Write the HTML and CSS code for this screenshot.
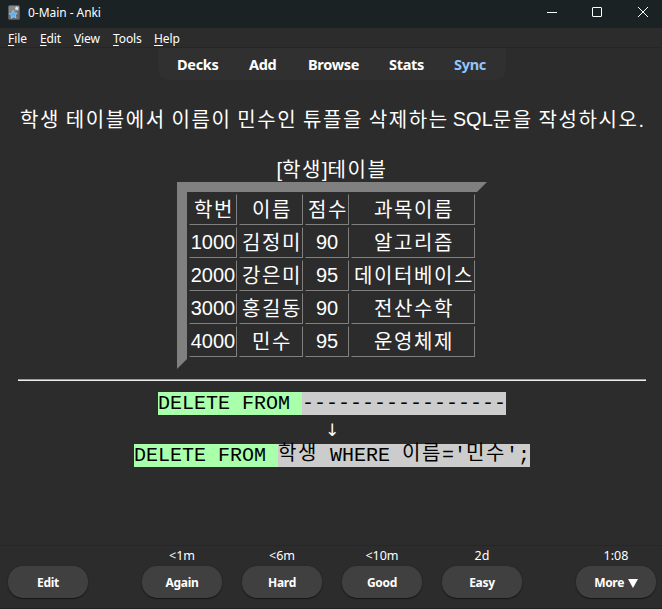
FILE: index.html
```html
<!DOCTYPE html>
<html lang="ko">
<head>
<meta charset="utf-8">
<title>0-Main - Anki</title>
<link rel="stylesheet" href="styles.css">
</head>
<body>
<header class="titlebar">
  <svg class="logo" width="12" height="15" viewBox="0 0 12 15">
    <rect x="0.2" y="0.2" width="11.6" height="14.6" rx="1.6" fill="#686a6b"/>
    <path d="M1 1h10v5L1 8z" fill="#858788"/>
    <path d="M5 5.3l1.4 2.5 2.8.2-1.8 2.1.7 2.8-2.7-1-2.4 1.5.2-2.8L1 8.7l2.9-.7z" fill="#5fb0f0" stroke="#c5e3fa" stroke-width=".5"/>
    <path d="M8.8 1l.7 1.4 1.5.1-1 1.2.3 1.5-1.5-.6-1.3.8.1-1.6L6.500 2.700l1.500-.3z" fill="#d8edfc"/>
  </svg>
  <span class="window-title">0-Main - Anki</span>
  <svg class="controls" width="104" height="12" viewBox="0 0 104 12" fill="none" stroke="#fff">
    <path d="M1 6.500h10"/>
    <rect x="46.500" y="1.500" width="9" height="9" rx=".5"/>
    <path d="M92 1l10 10M102 1L92 11"/>
  </svg>
</header>
<nav class="menubar">
  <span class="m-file"><u>F</u>ile</span><span class="m-edit"><u>E</u>dit</span><span class="m-view"><u>V</u>iew</span><span class="m-tools"><u>T</u>ools</span><span class="m-help"><u>H</u>elp</span>
</nav>
<nav class="toolbar">
  <span class="t-decks">Decks</span><span class="t-add">Add</span><span class="t-browse">Browse</span><span class="t-stats">Stats</span><span class="t-sync">Sync</span>
</nav>
<main class="card">
  <p class="question"><span class="ko">학생 테이블에서 이름이 민수인 튜플을 삭제하는</span> <span class="latin">SQL</span><span class="ko">문을 작성하시오</span>.</p>
  <p class="caption">[<span class="ko">학생</span>]<span class="ko">테이블</span></p>
  <table class="students">
    <colgroup><col class="c-id"><col class="c-name"><col class="c-score"><col class="c-subject"></colgroup>
    <tr><td class="ko">학번</td><td class="ko">이름</td><td class="ko">점수</td><td class="ko">과목이름</td></tr>
    <tr><td>1000</td><td class="ko">김정미</td><td>90</td><td class="ko">알고리즘</td></tr>
    <tr><td>2000</td><td class="ko">강은미</td><td>95</td><td class="ko">데이터베이스</td></tr>
    <tr><td>3000</td><td class="ko">홍길동</td><td>90</td><td class="ko">전산수학</td></tr>
    <tr><td>4000</td><td class="ko">민수</td><td>95</td><td class="ko">운영체제</td></tr>
  </table>
  <div class="divider"></div>
  <div class="answer">
    <div class="code"><span class="good">DELETE FROM </span><span class="missed">-----------------</span></div>
    <div class="arrow">↓</div>
    <div class="code"><span class="good">DELETE FROM </span><span class="missed"><span class="ko">학생</span> WHERE <span class="ko">이름</span>='<span class="ko">민수</span>';</span></div>
  </div>
</main>
<footer class="bottom">
  <div class="action"><span class="due"></span><button>Edit</button></div>
  <div class="grades">
    <div class="action"><span class="due">&lt;1m</span><button>Again</button></div>
    <div class="action"><span class="due">&lt;6m</span><button>Hard</button></div>
    <div class="action"><span class="due">&lt;10m</span><button>Good</button></div>
    <div class="action"><span class="due">2d</span><button>Easy</button></div>
  </div>
  <div class="action"><span class="due">1:08</span><button>More <svg width="10" height="9" viewBox="0 0 10 9"><path d="M0 0h10L5 9z" fill="#fff"/></svg></button></div>
</footer>
</body>
</html>
```
FILE: styles.css
```css
* { box-sizing: border-box; }
body {
  margin: 0;
  width: 662px;
  height: 609px;
  overflow: hidden;
  display: flex;
  flex-direction: column;
  background: #2c2c2c;
  color: #fff;
  font-family: "Noto Sans", sans-serif;
}
p { margin: 0; }
.titlebar {
  height: 28px;
  flex: none;
  display: flex;
  align-items: center;
  padding: 0 12px 3px 8px;
  background: #1b2223;
  font-size: 12px;
}
.logo { margin-top: -1px; }
.window-title { margin-left: 8px; letter-spacing: -0.05px; }
.controls { margin-left: auto; margin-top: -1px; }
.menubar {
  height: 20px;
  flex: none;
  display: flex;
  padding-left: 8px;
  border-bottom: 1px solid #262626;
  font-size: 12px;
  line-height: 21px;
  letter-spacing: -0.1px;
}
.menubar u { text-underline-offset: 2px; }
.m-file { width: 32px; }
.m-edit { width: 34px; }
.m-view { width: 39px; }
.m-tools { width: 41px; }
.toolbar {
  width: 348px;
  height: 32px;
  flex: none;
  margin-left: 158px;
  padding-left: 19px;
  display: flex;
  background: #303030;
  border-radius: 0 0 12px 12px;
  font-size: 14.5px;
  font-weight: 700;
  line-height: 33px;
  letter-spacing: -0.3px;
}
.t-decks { width: 72px; }
.t-add { width: 59px; }
.t-browse { width: 81px; }
.t-stats { width: 65px; }
.t-sync { color: #93c5fd; }
.card {
  flex: 1;
  padding: 27px 16px 0 18px;
  font: 20px/24px "Liberation Sans", "Noto Sans CJK KR", sans-serif;
  text-align: center;
}
.ko { font-family: "Noto Sans CJK KR", sans-serif; letter-spacing: 1.6px; }
.question { height: 50px; white-space: nowrap; word-spacing: -1.45px; }
.question .latin { position: relative; top: -1px; }
.caption { height: 25px; }
.students {
  width: 310px;
  height: 187px;
  margin: 0 auto;
  table-layout: fixed;
  border-collapse: separate;
  border-spacing: 2px;
  border: 10px solid transparent;
  border-top-color: #808080;
  border-left-color: #808080;
}
.students tr { height: 31px; }
.students td {
  padding: 0 0 2px;
  height: 31px;
  line-height: 24px;
  white-space: nowrap;
  border: 1px solid transparent;
  border-right-color: #808080;
  border-bottom-color: #808080;
}
.students td.ko { padding-left: 2px; }
.c-id { width: 48px; }
.c-name { width: 64px; }
.c-score { width: 44px; }
.c-subject { width: 124px; }
.divider {
  height: 2px;
  margin-top: 10px;
  border-top: 1px solid #9a9a9a;
  border-bottom: 1px solid #eee;
}
.answer { padding-top: 11px; }
.code {
  height: 23px;
  display: flex;
  justify-content: center;
  color: #000;
  font: 20px/23px "Liberation Mono", monospace;
  white-space: pre;
}
.code > span { height: 23px; }
.good { background: #afa; }
.missed { background: #ccc; }
.code .ko { line-height: 0; position: relative; top: -1px; }
.arrow { height: 29px; font: 17px/30px "DejaVu Sans", sans-serif; }
.bottom {
  height: 64px;
  flex: none;
  display: flex;
  justify-content: space-between;
  padding: 0 6px 0 8px;
  border-top: 1px solid #262626;
  border-bottom: 1px solid #222;
}
.grades { display: flex; gap: 20px; }
.action { width: 80px; display: flex; flex-direction: column; }
.due {
  height: 20px;
  text-align: center;
  font-size: 12.5px;
  line-height: 19px;
}
.action button {
  width: 80px;
  height: 32px;
  padding: 1px 0 0;
  border: 0;
  border-radius: 15px;
  background: #404040;
  box-shadow: 0 1px 1px #161616, 0 0 1px #202020;
  color: #fff;
  font: 700 12px/32px "Noto Sans", sans-serif;
  letter-spacing: -0.3px;
}
.action button svg { vertical-align: -0.5px; margin-left: 1px; }
```
